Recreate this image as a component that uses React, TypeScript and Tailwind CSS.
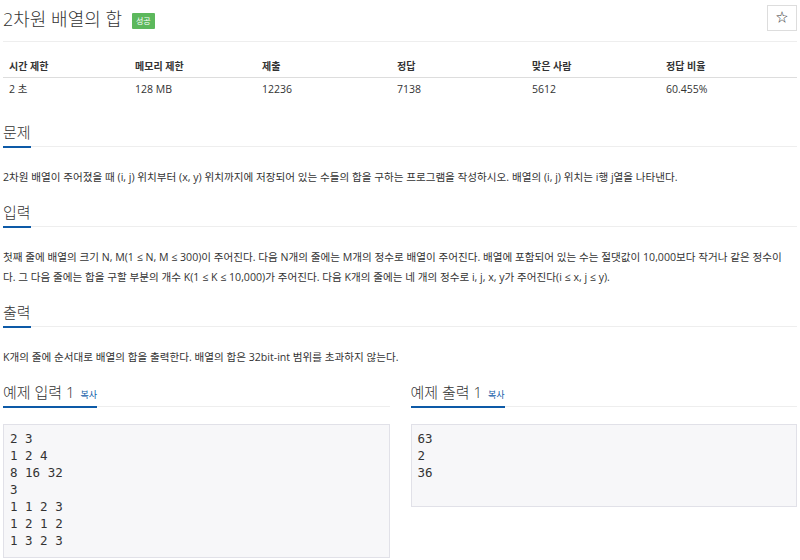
import React from "react";

const sans = "font-['Open_Sans','Noto_Sans_CJK_KR',sans-serif]";

function SectionHeading({ title, copy }: { title: string; copy?: boolean }) {
  return (
    <div className="flex items-end">
      <div className="border-b-2 border-[#0d5aa7] pb-[3px] flex items-baseline">
        <span className="text-[15px] leading-[22px] font-light text-[#333]">{title}</span>
        {copy && <span className="ml-[6px] text-[9px] text-[#0d5aa7]">복사</span>}
      </div>
      <div className="flex-1 border-b border-[#eeeeee] mb-[1px]" />
    </div>
  );
}

export default function App() {
  const headers = ["시간 제한", "메모리 제한", "제출", "정답", "맞은 사람", "정답 비율"];
  const values = ["2 초", "128 MB", "12236", "7138", "5612", "60.455%"];
  return (
    <div className={`w-[800px] h-[560px] overflow-hidden bg-white px-[3px] text-[#333] ${sans}`}>
      <div className="flex justify-between h-[42px] border-b border-[#eeeeee]">
        <div className="flex items-center h-[38px]">
          <span className="text-[18px] font-light text-[#333]">2차원 배열의 합</span>
          <span className="ml-[10px] mt-[3px] bg-[#5cb85c] text-white text-[8px] leading-[16px] px-[4px] rounded-[1px]">성공</span>
        </div>
        <button className="mt-[5px] w-[30px] h-[26px] border border-[#ddd] bg-white text-[12px] leading-none text-[#333] flex items-center justify-center">
          ☆
        </button>
      </div>

      <div className="mt-[14px] grid grid-cols-[126px_127px_135px_135px_134px_1fr] text-[10px]">
        {headers.map((h) => (
          <div key={h} className="pl-[6px] h-[22px] flex items-center font-bold border-b border-[#ddd]">
            {h}
          </div>
        ))}
        {values.map((v) => (
          <div key={v} className="pl-[6px] h-[23px] flex items-center text-[10.5px]">
            {v}
          </div>
        ))}
      </div>

      <div className="mt-[20px]">
        <SectionHeading title="문제" />
        <p className="mt-[19px] text-[10.6px] leading-[20px]">
          2차원 배열이 주어졌을 때 (i, j) 위치부터 (x, y) 위치까지에 저장되어 있는 수들의 합을 구하는 프로그램을 작성하시오. 배열의 (i, j) 위치는 i행 j열을 나타낸다.
        </p>
      </div>

      <div className="mt-[14px]">
        <SectionHeading title="입력" />
        <p className="mt-[19px] text-[10.6px] leading-[20px] pr-[6px]">
          첫째 줄에 배열의 크기 N, M(1 ≤ N, M ≤ 300)이 주어진다. 다음 N개의 줄에는 M개의 정수로 배열이 주어진다. 배열에 포함되어 있는 수는 절댓값이 10,000보다 작거나 같은 정수이다. 그 다음 줄에는 합을 구할 부분의 개수 K(1 ≤ K ≤ 10,000)가 주어진다. 다음 K개의 줄에는 네 개의 정수로 i, j, x, y가 주어진다(i ≤ x, j ≤ y).
        </p>
      </div>

      <div className="mt-[14px]">
        <SectionHeading title="출력" />
        <p className="mt-[19px] text-[10.6px] leading-[20px]">
          K개의 줄에 순서대로 배열의 합을 출력한다. 배열의 합은 32bit-int 범위를 초과하지 않는다.
        </p>
      </div>

      <div className="mt-[14px] grid grid-cols-2 gap-[21px] items-start">
        <div>
          <SectionHeading title="예제 입력 1" copy />
          <pre className="mt-[16px] bg-[#f7f7f9] border border-[#e1e1e8] pt-[5px] pb-[8px] px-[6px] font-['DejaVu_Sans_Mono',monospace] text-[12.5px] leading-[17px] text-[#333]">
{`2 3
1 2 4
8 16 32
3
1 1 2 3
1 2 1 2
1 3 2 3`}
          </pre>
        </div>
        <div>
          <SectionHeading title="예제 출력 1" copy />
          <pre className="mt-[16px] min-h-[83px] bg-[#f7f7f9] border border-[#e1e1e8] pt-[5px] pb-[8px] px-[6px] font-['DejaVu_Sans_Mono',monospace] text-[12.5px] leading-[17px] text-[#333]">
{`63
2
36`}
          </pre>
        </div>
      </div>
    </div>
  );
}
